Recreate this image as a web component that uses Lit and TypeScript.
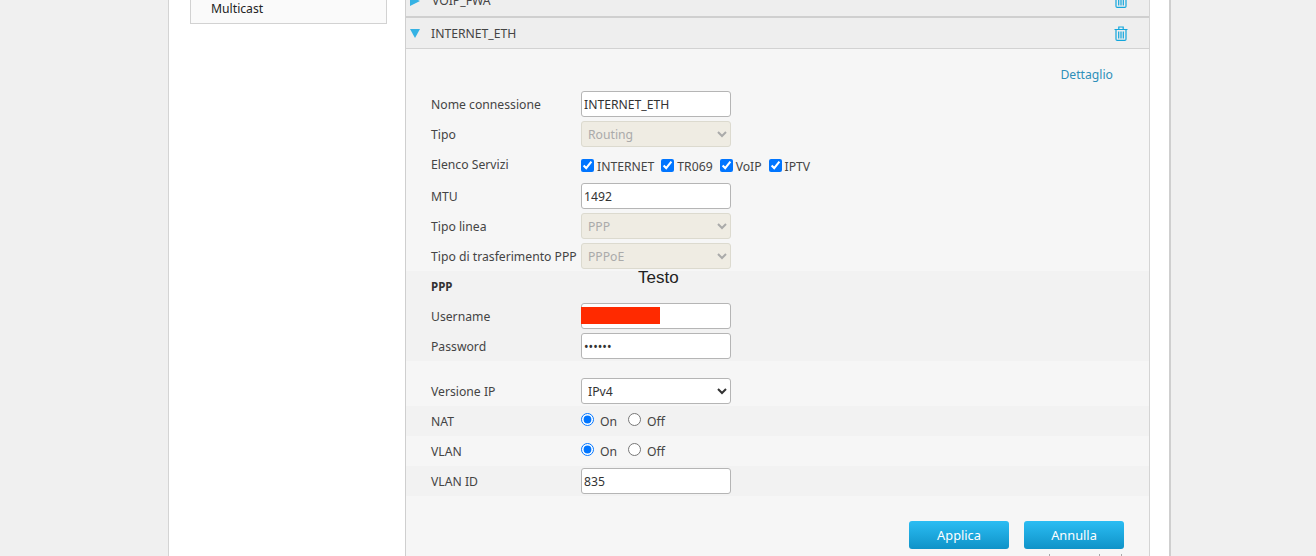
import { LitElement, html, css } from "lit";
import { customElement } from "lit/decorators.js";

const trash = html`<svg class="trash" width="14" height="15" viewBox="0 0 14 15" fill="none" stroke="#12a6dc" stroke-width="1.2">
  <path d="M0.5 3.5H13.5M4.8 3.5V1H9.2V3.5M2 3.5V13.2Q2 14.4 3.2 14.4H10.8Q12 14.4 12 13.2V3.5M4.7 5.5V12.4M7 5.5V12.4M9.3 5.5V12.4"/></svg>`;

@customElement("app-root")
export class AppRoot extends LitElement {
  static styles = css`
    :host { display: block; width: 1316px; height: 556px; overflow: hidden; background: #f0f0f0;
      font-family: "Noto Sans", "Open Sans", sans-serif; font-size: 12.2px; color: #333; }
    .card { width: 1000px; height: 556px; margin-left: 168px; box-sizing: content-box; background: #fff;
      border-left: 1px solid #d4d4d4; border-right: 2px solid #cfcfcf; display: flex; overflow: hidden; }
    .side { width: 197px; margin-left: 21px; flex: none; }
    .side-item { height: 24px; box-sizing: border-box; border: 1px solid #d2d2d2; border-top: 0; background: #fafafa;
      padding-left: 20px; line-height: 18px; color: #222; }
    .main { width: 745px; margin-left: 18px; flex: none; border-left: 1px solid #cfcfcf; border-right: 1px solid #d4d4d4; box-sizing: border-box; background: #f6f6f6; }
    .head { display: flex; align-items: center; height: 30px; background: #eee; padding: 0 21px 0 4px; border-bottom: 1px solid #d2d2d2; }
    .head.top { margin-top: -15px; border-bottom: 2px solid #cfcfcf; box-sizing: content-box; height: 31px; }
    .head .name { margin-left: 11px; flex: 1; color: #444; }
    .tri-r { width: 0; height: 0; border-left: 10px solid #35b2e4; border-top: 5px solid transparent; border-bottom: 5px solid transparent; margin-right: 1px; }
    .tri-d { width: 0; height: 0; border-top: 9px solid #35b2e4; border-left: 5.5px solid transparent; border-right: 5.5px solid transparent; }
    .detail { height: 40px; box-sizing: border-box; text-align: right; padding: 17px 36px 0 0; line-height: 17px; color: #2e8fb9; }
    .row { display: flex; align-items: center; height: 30px; padding-left: 25px; color: #444; }
    .row .lab { width: 150px; flex: none; white-space: nowrap; }
    .band { background: #f2f2f2; }
    .ppp { position: relative; height: 30px; }
    .ppp b { color: #333; font-weight: 700; font-size: 11.5px; }
    .testo { position: absolute; left: 232px; top: -3px; font: 17px/20px "Liberation Sans", sans-serif; color: #222; }
    .tall { height: 32px; padding-top: 1px; box-sizing: border-box; }
    .tall .lab { margin-bottom: 3px; }
    .gap { height: 15px; }
    input[type="text"], input[type="password"], select { width: 150px; height: 26px; box-sizing: border-box; margin: 0;
      border: 1px solid #b5b5b5; border-radius: 3px; background: #fff; font: inherit; color: #333; padding: 0 2px; outline: none; }
    select:disabled { background: #efece3; color: #aaa; border-color: #dcdacf; opacity: 1; }
    .checks { display: flex; align-items: center; margin-top: 1px; }
    .checks label { display: flex; align-items: center; margin-right: 7px; }
    input[type="checkbox"], input[type="radio"] { margin: 0 3px 2px 0; width: 13px; height: 13px; }
    .radios { display: flex; align-items: center; }
    .radios label { display: flex; align-items: center; margin-right: 11px; }
    .radios input { margin-right: 6px; margin-bottom: 3px; }
    .field { position: relative; display: flex; }
    .redact { position: absolute; left: 0; top: 4px; width: 79px; height: 17px; background: #ff2a00; }
    .actions { display: flex; justify-content: flex-end; gap: 15px; padding: 25px 25px 0 0; }
    .btn { width: 100px; height: 28px; border: 0; border-radius: 3px; padding: 0; color: #fff; font: inherit; font-size: 12.8px;
      background: linear-gradient(#2bbdf3, #0f93c8); }
    .ticks { display: flex; justify-content: flex-end; gap: 21px; padding: 5px 27px 0 0; }
    .ticks i { width: 1px; height: 3px; background: #aaa; }
    .ticks i:first-child { margin-right: 28px; }
  `;

  private sel(v: string, disabled = true) {
    return html`<select ?disabled=${disabled}><option>${v}</option></select>`;
  }
  private radios() {
    return html`<div class="radios"><label><input type="radio" checked />On</label><label><input type="radio" />Off</label></div>`;
  }

  render() {
    return html`<div class="card">
      <div class="side"><div class="side-item">Multicast</div></div>
      <div class="main">
        <div class="head top"><span class="tri-r"></span><span class="name">VOIP_FWA</span>${trash}</div>
        <div class="head"><span class="tri-d"></span><span class="name">INTERNET_ETH</span>${trash}</div>
        <div class="detail">Dettaglio</div>
        <div class="row"><span class="lab">Nome connessione</span><input type="text" value="INTERNET_ETH" /></div>
        <div class="row"><span class="lab">Tipo</span>${this.sel("Routing")}</div>
        <div class="row tall"><span class="lab">Elenco Servizi</span>
          <div class="checks">
            <label><input type="checkbox" checked />INTERNET</label>
            <label><input type="checkbox" checked />TR069</label>
            <label><input type="checkbox" checked />VoIP</label>
            <label><input type="checkbox" checked />IPTV</label>
          </div></div>
        <div class="row"><span class="lab">MTU</span><input type="text" value="1492" /></div>
        <div class="row"><span class="lab">Tipo linea</span>${this.sel("PPP")}</div>
        <div class="row"><span class="lab">Tipo di trasferimento PPP</span>${this.sel("PPPoE")}</div>
        <div class="band">
          <div class="row ppp"><b>PPP</b><span class="testo">Testo</span></div>
          <div class="row"><span class="lab">Username</span><div class="field"><input type="text" /><span class="redact"></span></div></div>
          <div class="row"><span class="lab">Password</span><input type="password" value="xxxxxx" /></div>
        </div>
        <div class="gap"></div>
        <div class="row"><span class="lab">Versione IP</span>${this.sel("IPv4", false)}</div>
        <div class="row band"><span class="lab">NAT</span>${this.radios()}</div>
        <div class="row"><span class="lab">VLAN</span>${this.radios()}</div>
        <div class="row band"><span class="lab">VLAN ID</span><input type="text" value="835" /></div>
        <div class="actions"><button class="btn">Applica</button><button class="btn">Annulla</button></div>
        <div class="ticks"><i></i><i></i><i></i></div>
      </div>
    </div>`;
  }
}
